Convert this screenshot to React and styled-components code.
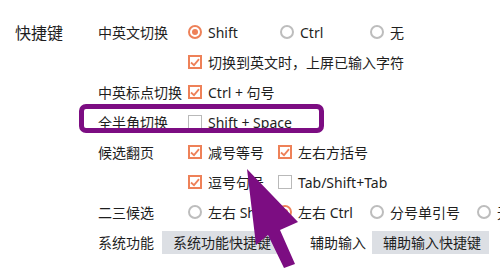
import React from "react";
import styled, { createGlobalStyle } from "styled-components";

const GlobalStyle = createGlobalStyle`
    html, body {
        margin: 0;
        padding: 0;
        background: #ffffff;
    }
    body {
        font-family: "Noto Sans", "Noto Sans CJK SC", sans-serif;
        color: #1e1e1e;
    }
`;

const ORANGE = "#ee8158";
const PURPLE = "#7c0d82";

const Page = styled.div`
    position: relative;
    width: 500px;
    height: 280px;
    overflow: hidden;
    display: flex;
    padding: 17px 0 0 15px;
    box-sizing: border-box;
`;

const Section = styled.div`
    width: 83px;
    height: 30px;
    display: flex;
    align-items: center;
    font-size: 16px;
    flex-shrink: 0;
`;

const Rows = styled.div`
    display: flex;
    flex-direction: column;
`;

const Row = styled.div`
    position: relative;
    height: 30px;
    display: flex;
    align-items: center;
    font-size: 14px;
    white-space: nowrap;
`;

const Highlight = styled.div`
    position: absolute;
    left: -19px;
    top: -3px;
    width: 245px;
    height: 29px;
    box-sizing: border-box;
    border: 5px solid ${ PURPLE };
    border-radius: 7px;
    pointer-events: none;
`;

const Label = styled.div`
    width: ${ props => props.w || 90 }px;
    flex-shrink: 0;
`;

const Option = styled.label`
    display: flex;
    align-items: center;
    gap: 6px;
    min-width: ${ props => props.w || 90 }px;
`;

const Box = styled.span`
    width: 14px;
    height: 14px;
    box-sizing: border-box;
    border: ${ props => props.on ? `2px solid ${ ORANGE }` : "1.5px solid #b9b9b9" };
    background: #fff;
    display: flex;
    align-items: center;
    justify-content: center;
    flex-shrink: 0;
`;

const Radio = styled.span`
    width: 14px;
    height: 14px;
    box-sizing: border-box;
    border-radius: 50%;
    border: 2px solid ${ props => props.on ? ORANGE : "#bdbdbd" };
    display: flex;
    align-items: center;
    justify-content: center;
    flex-shrink: 0;
    &::after {
        content: "";
        width: 6px;
        height: 6px;
        border-radius: 50%;
        background: ${ props => props.on ? ORANGE : "transparent" };
    }
`;

const Button = styled.button`
    height: 23px;
    padding: 0 8px 0 11px;
    border: none;
    background: #dcdfe4;
    font-family: inherit;
    font-size: 14px;
    color: #1e1e1e;
    display: flex;
    align-items: center;
`;

const Overlay = styled.svg`
    position: absolute;
    left: 0;
    top: 0;
    pointer-events: none;
`;

const Check = () => (
    <svg width="10" height="9" viewBox="0 0 10 9">
        <path d="M1 4.5 L4 7.2 L9 1.2" fill="none" stroke={ ORANGE } strokeWidth="1.8" />
    </svg>
);

const CheckOption = ({ on, children, w }) => (
    <Option w={ w }>
        <Box on={ on }>{ on && <Check /> }</Box>
        { children }
    </Option>
);

const RadioOption = ({ on, children, w }) => (
    <Option w={ w }>
        <Radio on={ on } />
        { children }
    </Option>
);

export default () => {

    return (
        <Page>
            <GlobalStyle />
            <Section>快捷键</Section>
            <Rows>
                <Row>
                    <Label>中英文切换</Label>
                    <RadioOption on w={ 92 }>Shift</RadioOption>
                    <RadioOption w={ 90 }>Ctrl</RadioOption>
                    <RadioOption>无</RadioOption>
                </Row>
                <Row>
                    <Label />
                    <CheckOption on>切换到英文时，上屏已输入字符</CheckOption>
                </Row>
                <Row>
                    <Label>中英标点切换</Label>
                    <CheckOption on>Ctrl + 句号</CheckOption>
                </Row>
                <Row>
                    <Highlight />
                    <Label>全半角切换</Label>
                    <CheckOption>Shift + Space</CheckOption>
                </Row>
                <Row>
                    <Label>候选翻页</Label>
                    <CheckOption on>减号等号</CheckOption>
                    <CheckOption on>左右方括号</CheckOption>
                </Row>
                <Row>
                    <Label />
                    <CheckOption on>逗号句号</CheckOption>
                    <CheckOption>Tab/Shift+Tab</CheckOption>
                </Row>
                <Row>
                    <Label>二三候选</Label>
                    <RadioOption>左右 Shift</RadioOption>
                    <RadioOption on w={ 92 }>左右 Ctrl</RadioOption>
                    <RadioOption w={ 107 }>分号单引号</RadioOption>
                    <RadioOption>无</RadioOption>
                </Row>
                <Row>
                    <Label w={ 64 }>系统功能</Label>
                    <Button>系统功能快捷键</Button>
                    <Label w={ 31 } />
                    <Label w={ 62 }>辅助输入</Label>
                    <Button>辅助输入快捷键</Button>
                </Row>
            </Rows>
            <Overlay width="500" height="280" viewBox="0 0 500 280">
                <polygon
                    points="247,169 298,222 280,230 295,264 284,268 268,235 256,245"
                    fill={ PURPLE }
                />
            </Overlay>
        </Page>
    )
}
